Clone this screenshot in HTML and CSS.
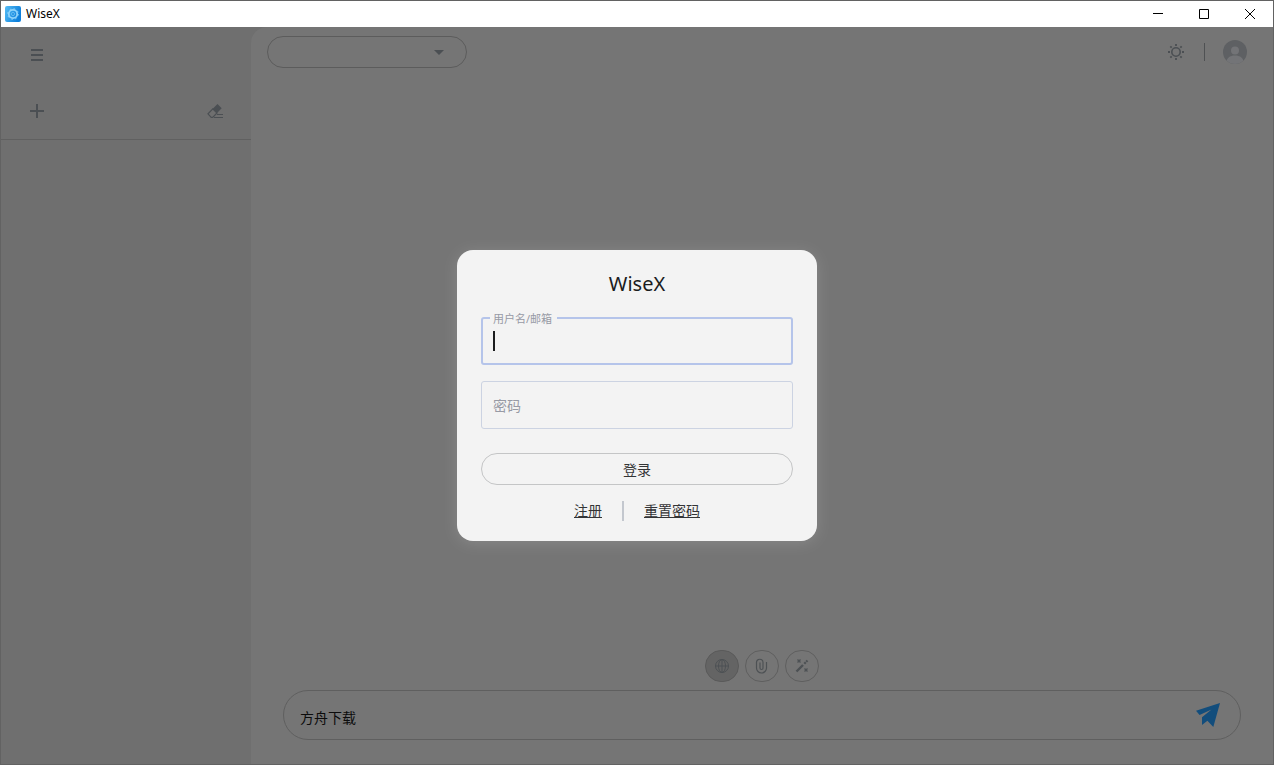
FILE: index.html
```html
<!DOCTYPE html>
<html lang="zh-CN">
<head>
  <meta charset="UTF-8">
  <meta name="viewport" content="width=device-width, initial-scale=1">
  <title>WiseX</title>
  <link rel="stylesheet" href="styles.css">
</head>
<body>
  <div class="window">
    <!-- Title bar -->
    <header class="titlebar">
      <svg class="app-icon" viewBox="0 0 16 16" aria-hidden="true">
        <defs>
          <linearGradient id="logo" x1="0" y1="0" x2="1" y2="0.4">
            <stop offset="0" stop-color="#55bdf5"/>
            <stop offset="1" stop-color="#0d7fdb"/>
          </linearGradient>
        </defs>
        <rect width="16" height="16" rx="2" fill="url(#logo)"/>
        <circle cx="8" cy="8" r="4.2" fill="none" stroke="#8fd4fb" stroke-width="1.8"/>
        <circle cx="8" cy="8" r="5.3" fill="none" stroke="#8fd4fb" stroke-width="1" stroke-dasharray="1.6 2.56"/>
        <circle cx="8" cy="8" r="1.6" fill="none" stroke="#5fb8f2" stroke-width="1"/>
      </svg>
      <span class="app-name">WiseX</span>
      <div class="window-controls">
        <button type="button" aria-label="最小化"><svg viewBox="0 0 10 10"><path d="M0 4.5h10"/></svg></button>
        <button type="button" aria-label="最大化"><svg viewBox="0 0 10 10"><path d="M.5.5h9v9h-9z"/></svg></button>
        <button type="button" aria-label="关闭"><svg viewBox="0 0 10 10"><path d="M0 0l10 10M10 0L0 10"/></svg></button>
      </div>
    </header>

    <div class="workspace">
      <!-- Sidebar -->
      <aside class="sidebar">
        <div class="sidebar-row">
          <button type="button" class="icon-btn" aria-label="菜单">
            <svg width="16" height="16" viewBox="0 0 16 16"><path d="M2 3h12M2 8h12M2 13h12" stroke="currentColor" stroke-width="2"/></svg>
          </button>
        </div>
        <div class="sidebar-row actions">
          <button type="button" class="icon-btn" aria-label="新建">
            <svg width="16" height="16" viewBox="0 0 16 16"><path d="M8 1v14M1 8h14" stroke="currentColor" stroke-width="2"/></svg>
          </button>
          <button type="button" class="icon-btn" aria-label="清除">
            <svg width="16" height="16" viewBox="0 0 16 16">
              <path d="M10.5 1l4.200 4.200L10 10 5.500 6z" fill="currentColor"/>
              <path d="M5.800 5.800L1 10.800l3.200 3.500h1.500L10 10z" fill="none" stroke="currentColor" stroke-width="1.200"/>
              <path d="M10 11.500h6M7 14.500h9" stroke="currentColor"/>
            </svg>
          </button>
        </div>
      </aside>

      <!-- Chat -->
      <main class="chat">
        <div class="toolbar">
          <div class="model">
            <select class="model-select" aria-label="模型"><option></option></select>
            <svg class="model-arrow" viewBox="0 0 10 5" aria-hidden="true"><path d="M0 0h10L5 5z" fill="currentColor"/></svg>
          </div>
          <div class="toolbar-right">
            <button type="button" class="icon-btn" aria-label="主题">
              <svg width="16" height="16" viewBox="0 0 16 16" fill="none" stroke="currentColor">
                <circle cx="8" cy="8" r="4.200" stroke-width="1.600"/>
                <path d="M8 0v2M8 14v2M0 8h2M14 8h2M2.300 2.300l1.400 1.400M12.300 12.300l1.400 1.400M2.300 13.700l1.400-1.400M12.300 3.700l1.400-1.400" stroke-width="1.800"/>
              </svg>
            </button>
            <span class="toolbar-divider"></span>
            <button type="button" class="icon-btn" aria-label="账户">
              <svg width="24" height="24" viewBox="0 0 24 24">
                <defs><clipPath id="face"><circle cx="12" cy="12" r="12"/></clipPath></defs>
                <g clip-path="url(#face)">
                  <path d="M0 0h24v24H0z" fill="#5e6063"/>
                  <circle cx="12" cy="10.500" r="4" fill="#737477"/>
                  <path d="M3 24c0-6 4-8.500 9-8.500s9 2.500 9 8.500z" fill="#737477"/>
                </g>
              </svg>
            </button>
          </div>
        </div>

        <div class="tools">
          <button type="button" class="tool active" aria-label="联网">
            <svg viewBox="0 0 16 16"><circle cx="8" cy="8" r="6.500"/><ellipse cx="8" cy="8" rx="3.500" ry="6.500"/><path d="M1.500 8h13M8 1.500v13"/></svg>
          </button>
          <button type="button" class="tool" aria-label="附件">
            <svg viewBox="0 0 16 16"><path d="M12.500 4v6a5 5 0 0 1-10 0V4.500a3.200 3.200 0 0 1 6.500 0v5.500a1.500 1.500 0 0 1-3 0V4.500" stroke-width="1.200"/></svg>
          </button>
          <button type="button" class="tool" aria-label="魔法">
            <svg viewBox="0 0 16 16"><path d="M2.500 13.500l6.500-6.500" stroke-width="2.400"/><path d="M10.300 5.700L13.500 2.500" stroke-width="2.200" stroke-dasharray="2 .7"/><path d="M3.500 1.500l3 3M6.500 1.500l-3 3M10.500 10.500l3 3M13.500 10.500l-3 3" stroke-width="1.300"/></svg>
          </button>
        </div>

        <form class="composer">
          <input class="composer-input" type="text" value="方舟下载" aria-label="消息">
          <button type="button" class="send" aria-label="发送">
            <svg width="24" height="24" viewBox="0 0 24 24"><path d="M24 0L17.300 24 11.400 17.700 6 22V14.300L15.500 6.500 3.600 12 0 7.700z" fill="#124d7c"/></svg>
          </button>
        </form>
      </main>

      <!-- Login -->
      <div class="overlay">
        <form class="login" role="dialog" aria-labelledby="login-title">
          <h1 class="login-title" id="login-title">WiseX</h1>
          <div class="field focused">
            <label for="username">用户名/邮箱</label>
            <input id="username" type="text">
            <span class="caret"></span>
          </div>
          <div class="field">
            <input id="password" type="password" placeholder="密码" aria-label="密码">
          </div>
          <button type="button" class="login-btn">登录</button>
          <nav class="login-links">
            <a href="#register">注册</a>
            <span class="link-divider"></span>
            <a href="#reset">重置密码</a>
          </nav>
        </form>
      </div>
    </div>
  </div>
</body>
</html>
```
FILE: styles.css
```css
* {
  box-sizing: border-box;
}

body {
  margin: 0;
  font-family: "Noto Sans", "Noto Sans CJK SC", sans-serif;
  font-size: 14px;
  color: #1b1c1e;
}

button,
input,
select {
  font: inherit;
  color: inherit;
}

button {
  padding: 0;
  border: 0;
  background: none;
}

svg {
  display: block;
}

.window {
  display: flex;
  flex-direction: column;
  height: 100vh;
  border: 1px solid #626262;
  background: #6f6f6f;
}

/* Title bar */
.titlebar {
  display: flex;
  align-items: center;
  height: 26px;
  padding-left: 4px;
  background: #fff;
}

.app-icon {
  width: 16px;
  height: 16px;
}

.app-name {
  margin-left: 5px;
  padding-bottom: 2px;
  font-size: 12px;
  color: #000;
}

.window-controls {
  display: flex;
  align-self: stretch;
  margin-left: auto;
}

.window-controls button {
  display: grid;
  place-items: center;
  width: 46px;
}

.window-controls svg {
  width: 10px;
  height: 10px;
  fill: none;
  stroke: #000;
}

/* Workspace */
.workspace {
  position: relative;
  display: grid;
  grid-template-columns: 250px 1fr;
  flex: 1;
  min-height: 0;
}

.icon-btn {
  color: #4b4f53;
}

.sidebar-row {
  display: flex;
  align-items: center;
  justify-content: space-between;
  height: 56px;
  padding: 0 28px;
}

.sidebar-row.actions {
  height: 57px;
  border-bottom: 1px solid #606060;
}

.chat {
  display: flex;
  flex-direction: column;
  border-top-left-radius: 16px;
  background: #757575;
}

.toolbar {
  display: flex;
  justify-content: space-between;
  align-items: center;
  padding: 9px 26px 0 16px;
}

.model {
  position: relative;
  width: 200px;
  height: 32px;
}

.model-select {
  width: 100%;
  height: 100%;
  border: 1px solid #5c5c5c;
  border-radius: 16px;
  appearance: none;
  background: none;
}

.model-arrow {
  position: absolute;
  top: 14px;
  right: 23px;
  width: 10px;
  height: 5px;
  color: #4b4f53;
  pointer-events: none;
}

.toolbar-right {
  display: flex;
  align-items: center;
  gap: 18px;
}

.toolbar-divider {
  width: 1px;
  height: 18px;
  margin-left: 2px;
  background: #4f5153;
}

.tools {
  display: flex;
  justify-content: center;
  gap: 6px;
  margin-top: auto;
}

.tool {
  display: grid;
  place-items: center;
  width: 34px;
  height: 32px;
  border: 1px solid #5f5f5f;
  border-radius: 16px;
  color: #4d5154;
}

.tool.active {
  background: #646464;
  border-color: #5a5a5a;
}

.tool svg {
  width: 16px;
  height: 16px;
  fill: none;
  stroke: currentColor;
}

.composer {
  display: flex;
  align-items: center;
  height: 50px;
  margin: 8px 32px 24px;
  padding: 0 20px 0 16px;
  border: 1px solid #5f5f5f;
  border-radius: 25px;
}

.composer-input {
  flex: 1;
  height: 100%;
  padding: 4px 0 0;
  border: 0;
  outline: 0;
  background: none;
  color: #0c0c0c;
}

/* Login */
.overlay {
  position: absolute;
  inset: 0;
  display: grid;
  place-items: center;
}

.login {
  width: 360px;
  padding: 20px 24px;
  border-radius: 16px;
  background: #f3f3f3;
  box-shadow: 0 2px 16px rgba(255, 255, 255, 0.15);
}

.login-title {
  margin: 0 0 19px;
  font-size: 20px;
  font-weight: 400;
  line-height: 28px;
  text-align: center;
}

.field {
  position: relative;
  height: 48px;
  margin-bottom: 16px;
}

.field input {
  width: 100%;
  height: 100%;
  padding: 0 11px;
  border: 1px solid #ccd3e2;
  border-radius: 3px;
  outline: 0;
  background: none;
}

.field input::placeholder {
  color: #979aa5;
}

.field.focused input {
  border: 2px solid #b5c4ea;
}

.field label {
  position: absolute;
  top: -6px;
  left: 9px;
  padding: 0 5px 0 3px;
  font-size: 11px;
  line-height: 16px;
  color: #979aa5;
  background: #f3f3f3;
}

.caret {
  position: absolute;
  top: 14px;
  left: 12px;
  width: 2px;
  height: 20px;
  background: #1b1c1e;
}

.login-btn {
  width: 100%;
  height: 32px;
  margin-top: 8px;
  border: 1px solid #c4c5c6;
  border-radius: 16px;
  color: #333436;
}

.login-links {
  display: flex;
  justify-content: center;
  align-items: center;
  gap: 20px;
  margin-top: 16px;
  line-height: 20px;
}

.login-links a {
  color: #333436;
}

.link-divider {
  width: 2px;
  height: 20px;
  background: #c3c7ce;
}
```
